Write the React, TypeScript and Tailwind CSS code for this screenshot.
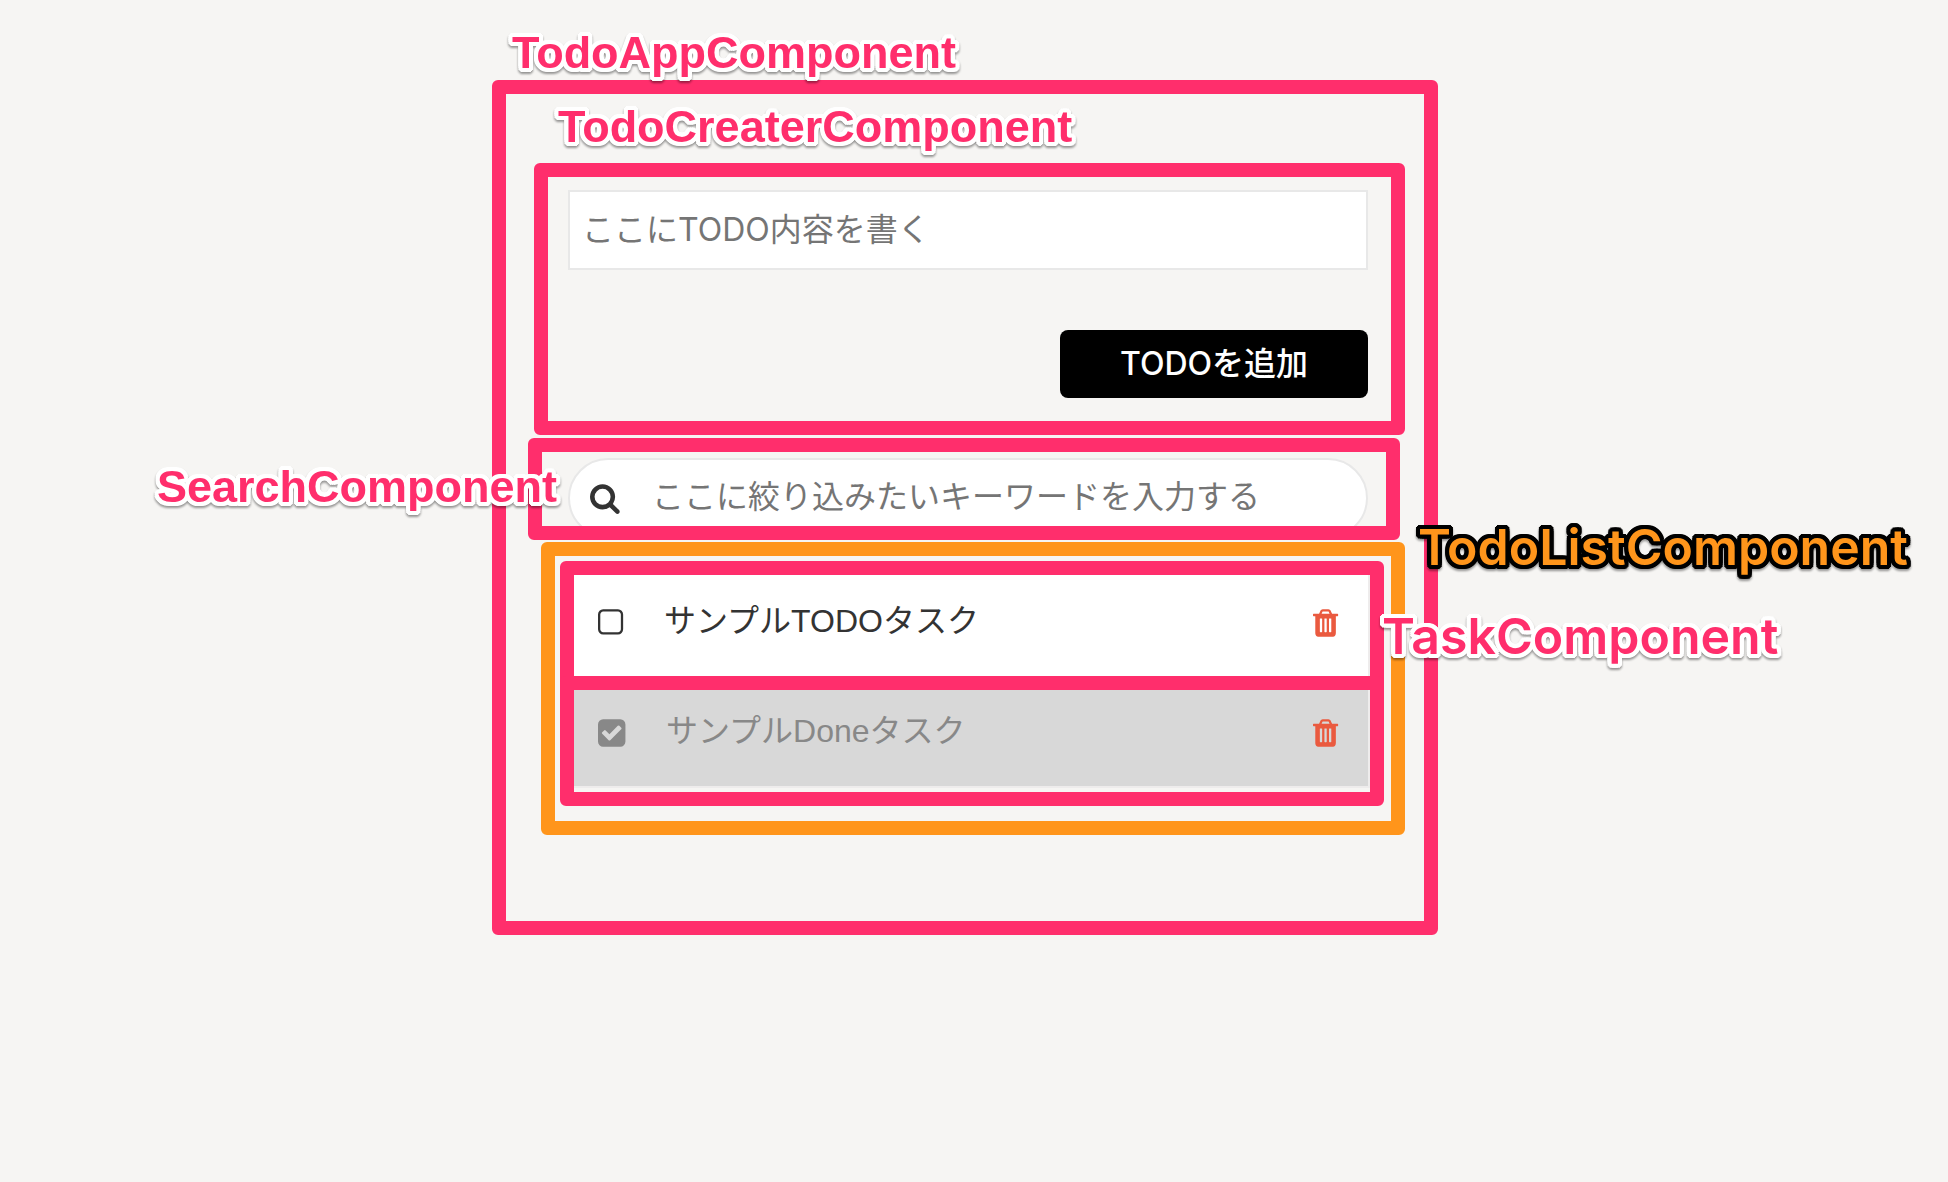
import { useState } from "react";
import type { ReactNode } from "react";

const ICONS = {
  search: {
    box: "64 0 1792 1792",
    d: "M1216 832q0-185-131.5-316.5t-316.5-131.5-316.5 131.5-131.5 316.5 131.5 316.5 316.5 131.5 316.5-131.5 131.5-316.5zm512 832q0 52-38 90t-90 38q-54 0-90-38l-343-342q-179 124-399 124-143 0-273.5-55.5t-225-150-150-225-55.5-273.5 55.5-273.5 150-225 225-150 273.5-55.5 273.5 55.5 225 150 150 225 55.5 273.5q0 220-124 399l343 343q37 37 37 90z",
  },
  trash: {
    box: "192 0 1792 1792",
    d: "M704 1376v-704q0-14-9-23t-23-9h-64q-14 0-23 9t-9 23v704q0 14 9 23t23 9h64q14 0 23-9t9-23zm256 0v-704q0-14-9-23t-23-9h-64q-14 0-23 9t-9 23v704q0 14 9 23t23 9h64q14 0 23-9t9-23zm256 0v-704q0-14-9-23t-23-9h-64q-14 0-23 9t-9 23v704q0 14 9 23t23 9h64q14 0 23-9t9-23zm-544-992h448l-48-117q-7-9-17-11h-317q-10 2-17 11zm928 32v64q0 14-9 23t-23 9h-96v948q0 83-47 143.5t-113 60.5h-832q-66 0-113-58.5t-47-141.5v-952h-96q-14 0-23-9t-9-23v-64q0-14 9-23t23-9h309l70-167q15-37 54-63t79-26h320q40 0 79 26t54 63l70 167h309q14 0 23 9t9 23z",
  },
  checked: {
    box: "128 0 1792 1792",
    d: "M813 1299l614-614q19-19 19-45t-19-45l-102-102q-19-19-45-19t-45 19l-467 467-211-211q-19-19-45-19t-45 19l-102 102q-19 19-19 45t19 45l358 358q19 19 45 19t45-19zm851-883v960q0 119-84.5 203.5t-203.5 84.5h-960q-119 0-203.5-84.5t-84.5-203.5v-960q0-119 84.5-203.5t203.5-84.5h960q119 0 203.5 84.5t84.5 203.5z",
  },
  unchecked: {
    box: "192 0 1792 1792",
    d: "M1312 256h-832q-66 0-113 47t-47 113v832q0 66 47 113t113 47h832q66 0 113-47t47-113v-832q0-66-47-113t-113-47zm288 160v832q0 119-84.5 203.5t-203.5 84.5h-832q-119 0-203.5-84.5t-84.5-203.5v-832q0-119 84.5-203.5t203.5-84.5h832q119 0 203.5 84.5t84.5 203.5z",
  },
};

function Icon({ name }: { name: keyof typeof ICONS }) {
  return (
    <svg viewBox={ICONS[name].box} className="size-8 shrink-0 fill-current" aria-hidden="true">
      <path d={ICONS[name].d} />
    </svg>
  );
}

const PINK_TAG =
  "font-['Liberation_Sans',sans-serif] text-[45px] font-bold text-[#ff2e6c] [--halo:#fff]";
const WIDE_TAG = "font-['Inter',sans-serif] text-[50px] font-semibold";

function Tag({ className, children }: { className: string; children: ReactNode }) {
  return (
    <span
      className={`absolute z-10 whitespace-nowrap leading-none [text-shadow:4px_0_var(--halo),4px_2px_var(--halo),3px_3px_var(--halo),2px_4px_var(--halo),0_4px_var(--halo),-2px_4px_var(--halo),-3px_3px_var(--halo),-4px_2px_var(--halo),-4px_0_var(--halo),-4px_-2px_var(--halo),-3px_-3px_var(--halo),-2px_-4px_var(--halo),0_-4px_var(--halo),2px_-4px_var(--halo),3px_-3px_var(--halo),4px_-2px_var(--halo)] [filter:drop-shadow(0_2px_1px_rgb(0_0_0/0.4))] ${className}`}
    >
      {children}
    </span>
  );
}

function TodoCreater() {
  return (
    <form
      className="mr-[19px] ml-7 rounded-md border-14 border-[#ff2e6c] pt-[13px] pr-[23px] pb-[23px] pl-5"
      onSubmit={(e) => e.preventDefault()}
    >
      <input
        type="text"
        aria-label="TODO内容"
        placeholder="ここにTODO内容を書く"
        className="block h-20 w-full border-2 border-[#e8e8e8] bg-white px-3 pb-0.5 text-[32px] text-[#333] placeholder:text-[#757575] focus:outline-none"
      />
      <button
        type="submit"
        className="mt-15 ml-auto block h-17 w-77 rounded-lg bg-black text-[32px] leading-none font-medium text-white"
      >
        TODOを追加
      </button>
    </form>
  );
}

function Search() {
  return (
    <div className="mt-[3px] mr-6 ml-[22px] h-[102px] overflow-hidden rounded-md border-14 border-[#ff2e6c] pt-1.5 pr-[18px] pl-[26px]">
      <label className="flex h-20 items-center rounded-full border-2 border-[#e8e8e8] bg-white pb-1 pl-5 text-[#333]">
        <span className="pt-1">
          <Icon name="search" />
        </span>
        <input
          type="text"
          aria-label="キーワード"
          placeholder="ここに絞り込みたいキーワードを入力する"
          className="ml-[30px] h-full min-w-0 flex-1 bg-transparent text-[32px] placeholder:text-[#757575] focus:outline-none"
        />
      </label>
    </div>
  );
}

function Task({ text, initial, className }: { text: string; initial: boolean; className: string }) {
  const [done, setDone] = useState(initial);
  return (
    <li className={`rounded-md border-14 border-[#ff2e6c] ${className}`}>
      <div
        className={`flex items-start border-r-2 border-[#eeecec] pr-[30px] pl-6 ${
          done ? "h-[98px] border-b-2 bg-[#d8d8d8] pt-[27px]" : "h-[101px] bg-white pt-8"
        }`}
      >
        <label
          className={`flex items-start gap-[41px] font-['Liberation_Sans','Noto_Sans_CJK_JP',sans-serif] text-[32px] leading-7 ${
            done ? "text-[#888]" : "text-[#333]"
          }`}
        >
          <input
            type="checkbox"
            className="sr-only"
            checked={done}
            onChange={() => setDone(!done)}
          />
          <span className={done ? "flex w-[27px]" : "flex w-[25px]"}>
            <Icon name={done ? "checked" : "unchecked"} />
          </span>
          {text}
        </label>
        <button type="button" aria-label="削除" className="ml-auto flex w-[25px] text-[#ea5a3f]">
          <Icon name="trash" />
        </button>
      </div>
    </li>
  );
}

function TodoList() {
  return (
    <ul className="mt-0.5 mr-[19px] ml-[35px] rounded-md border-14 border-[#ff951b] pt-[5px] pr-[7px] pb-[15px] pl-[5px]">
      <Task text="サンプルTODOタスク" initial={false} className="" />
      <Task text="サンプルDoneタスク" initial={true} className="-mt-3.5 pb-1" />
    </ul>
  );
}

export default function App() {
  return (
    <main
      lang="ja"
      className="min-h-screen overflow-x-hidden bg-[#f6f5f3] pt-20 pr-[18px] font-['Inter','Noto_Sans_CJK_JP',sans-serif]"
    >
      <section className="relative mx-auto w-full max-w-[946px] rounded-md border-14 border-[#ff2e6c] pt-[69px] pb-[86px]">
        <Tag className={`-top-16 left-1.5 ${PINK_TAG}`}>TodoAppComponent</Tag>
        <Tag className={`top-2.5 left-13 ${PINK_TAG}`}>TodoCreaterComponent</Tag>
        <TodoCreater />
        <Search />
        <TodoList />
        <Tag className={`top-[370px] right-[867px] ${PINK_TAG}`}>SearchComponent</Tag>
        <Tag className={`top-[428px] left-[912px] text-[#ff951b] [--halo:#000] ${WIDE_TAG}`}>
          TodoListComponent
        </Tag>
        <Tag className={`top-[517px] left-[876px] text-[#ff2e6c] [--halo:#fff] ${WIDE_TAG}`}>
          TaskComponent
        </Tag>
      </section>
    </main>
  );
}
